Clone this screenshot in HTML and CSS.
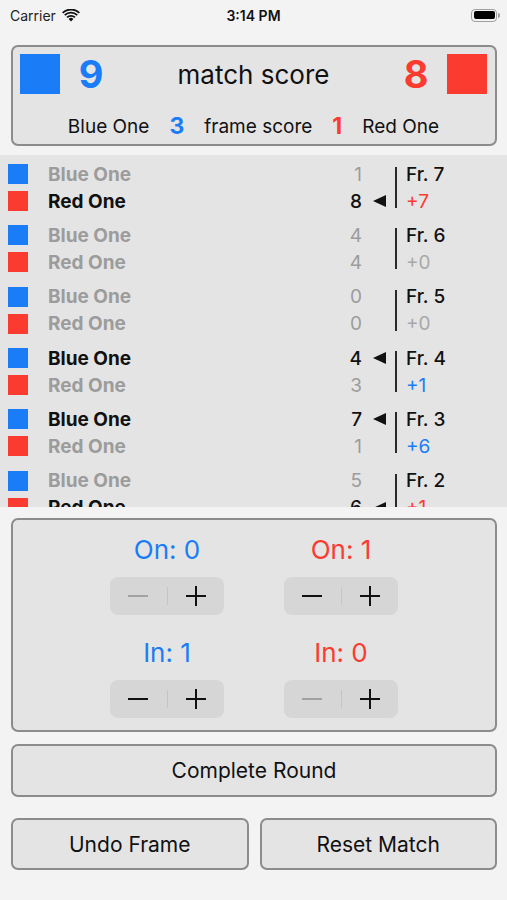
FILE: index.html
```html
<!DOCTYPE html>
<html>
<head>
<meta charset="utf-8">
<link rel="stylesheet" href="styles.css">
</head>
<body>
<div class="status">
  <div class="carrier">Carrier
    <svg class="wifi" width="18" height="13" viewBox="0 0 18 13"><path d="M9 12.5 L6.6 10 A3.4 3.4 0 0 1 11.4 10 Z" fill="#111"/><path d="M4.4 7.8 A6.5 6.5 0 0 1 13.6 7.8 L12.3 9.1 A4.7 4.7 0 0 0 5.7 9.1 Z" fill="#111"/><path d="M2.1 5.5 A9.8 9.8 0 0 1 15.9 5.5 L14.6 6.8 A8 8 0 0 0 3.4 6.8 Z" fill="#111"/><path d="M0 3.3 A12.8 12.8 0 0 1 18 3.3 L16.7 4.6 A11 11 0 0 0 1.3 4.6 Z" fill="#111"/></svg>
  </div>
  <div class="time">3:14 PM</div>
  <div class="battery"><span class="batt-body"><span class="batt-fill"></span></span><span class="batt-nub"></span></div>
</div>

<section class="card score-card">
  <div class="score-top">
    <span class="sq big blue-bg"></span>
    <span class="big-num blue">9</span>
    <span class="match-label">match score</span>
    <span class="big-num red">8</span>
    <span class="sq big red-bg"></span>
  </div>
  <div class="score-bottom">
    <span>Blue One</span>
    <span class="frame-num blue">3</span>
    <span>frame score</span>
    <span class="frame-num red">1</span>
    <span>Red One</span>
  </div>
</section>

<section class="frames">
  <div class="frame">
    <span class="sq blue-bg r1"></span><span class="name dim r1">Blue One</span><span class="pts dim r1">1</span><span class="mark r1"></span>
    <span class="sq red-bg r2"></span><span class="name win r2">Red One</span><span class="pts win r2">8</span><span class="mark r2"><i class="tri"></i></span>
    <span class="vline"></span>
    <span class="fr r1">Fr. 7</span><span class="diff red r2">+7</span>
  </div>
  <div class="frame">
    <span class="sq blue-bg r1"></span><span class="name dim r1">Blue One</span><span class="pts dim r1">4</span><span class="mark r1"></span>
    <span class="sq red-bg r2"></span><span class="name dim r2">Red One</span><span class="pts dim r2">4</span><span class="mark r2"></span>
    <span class="vline"></span>
    <span class="fr r1">Fr. 6</span><span class="diff dim-d r2">+0</span>
  </div>
  <div class="frame">
    <span class="sq blue-bg r1"></span><span class="name dim r1">Blue One</span><span class="pts dim r1">0</span><span class="mark r1"></span>
    <span class="sq red-bg r2"></span><span class="name dim r2">Red One</span><span class="pts dim r2">0</span><span class="mark r2"></span>
    <span class="vline"></span>
    <span class="fr r1">Fr. 5</span><span class="diff dim-d r2">+0</span>
  </div>
  <div class="frame">
    <span class="sq blue-bg r1"></span><span class="name win r1">Blue One</span><span class="pts win r1">4</span><span class="mark r1"><i class="tri"></i></span>
    <span class="sq red-bg r2"></span><span class="name dim r2">Red One</span><span class="pts dim r2">3</span><span class="mark r2"></span>
    <span class="vline"></span>
    <span class="fr r1">Fr. 4</span><span class="diff blue r2">+1</span>
  </div>
  <div class="frame">
    <span class="sq blue-bg r1"></span><span class="name win r1">Blue One</span><span class="pts win r1">7</span><span class="mark r1"><i class="tri"></i></span>
    <span class="sq red-bg r2"></span><span class="name dim r2">Red One</span><span class="pts dim r2">1</span><span class="mark r2"></span>
    <span class="vline"></span>
    <span class="fr r1">Fr. 3</span><span class="diff blue r2">+6</span>
  </div>
  <div class="frame">
    <span class="sq blue-bg r1"></span><span class="name dim r1">Blue One</span><span class="pts dim r1">5</span><span class="mark r1"></span>
    <span class="sq red-bg r2"></span><span class="name win r2">Red One</span><span class="pts win r2">6</span><span class="mark r2"><i class="tri"></i></span>
    <span class="vline"></span>
    <span class="fr r1">Fr. 2</span><span class="diff red r2">+1</span>
  </div>
</section>

<section class="card controls">
  <div class="ctrl-row">
    <div class="ctrl">
      <div class="ctrl-label blue">On: 0</div>
      <div class="stepper"><span class="step-btn"><i class="minus off"></i></span><span class="step-div"></span><span class="step-btn"><i class="plus"></i></span></div>
    </div>
    <div class="ctrl">
      <div class="ctrl-label red">On: 1</div>
      <div class="stepper"><span class="step-btn"><i class="minus"></i></span><span class="step-div"></span><span class="step-btn"><i class="plus"></i></span></div>
    </div>
  </div>
  <div class="ctrl-row second">
    <div class="ctrl">
      <div class="ctrl-label blue">In: 1</div>
      <div class="stepper"><span class="step-btn"><i class="minus"></i></span><span class="step-div"></span><span class="step-btn"><i class="plus"></i></span></div>
    </div>
    <div class="ctrl">
      <div class="ctrl-label red">In: 0</div>
      <div class="stepper"><span class="step-btn"><i class="minus off"></i></span><span class="step-div"></span><span class="step-btn"><i class="plus"></i></span></div>
    </div>
  </div>
</section>

<div class="btn full">Complete Round</div>
<div class="btn-row">
  <div class="btn">Undo Frame</div>
  <div class="btn">Reset Match</div>
</div>
</body>
</html>
```

FILE: styles.css
```css
* { box-sizing: border-box; }
html, body { margin: 0; padding: 0; }
body {
  width: 507px;
  height: 900px;
  background: #f3f3f3;
  font-family: Inter, "Noto Sans", sans-serif;
  color: #111;
  overflow: hidden;
}
.blue { color: #1a7df7; }
.red { color: #fb3b30; }
.blue-bg { background: #1a7df7; }
.red-bg { background: #fb3b30; }

.status {
  height: 30px;
  display: flex;
  align-items: center;
  justify-content: space-between;
  padding: 0 7px 0 10px;
  position: relative;
}
.carrier {
  font-size: 14px;
  display: flex;
  align-items: center;
  gap: 6px;
  color: #222;
}
.time {
  position: absolute;
  left: 0; right: 0;
  text-align: center;
  font-size: 14px;
  font-weight: 600;
  pointer-events: none;
}
.battery { display: flex; align-items: center; }
.batt-body {
  width: 26px; height: 13px;
  border: 1.5px solid #a0a0a0;
  border-radius: 4px;
  padding: 1.5px;
  display: flex;
}
.batt-fill { flex: 1; background: #000; border-radius: 2px; }
.batt-nub { width: 2px; height: 5px; background: #a0a0a0; border-radius: 0 2px 2px 0; margin-left: 1px; }

.card {
  margin: 0 10px 0 11px;
  background: #e4e4e4;
  border: 2px solid #8c8c8c;
  border-radius: 7px;
}
.score-card {
  margin-top: 15px;
  height: 101px;
  padding: 7px 8px 0 7px;
}
.score-top {
  display: flex;
  align-items: center;
  height: 40px;
}
.sq { display: inline-block; width: 20px; height: 20px; }
.sq.big { width: 40px; height: 40px; }
.big-num {
  font-size: 38px;
  font-weight: 700;
  width: 62px;
  text-align: center;
}
.match-label {
  flex: 1;
  text-align: center;
  font-size: 26px;
}
.score-bottom {
  display: flex;
  justify-content: center;
  align-items: center;
  gap: 20px;
  margin-top: 18px;
  font-size: 19px;
}
.frame-num { font-size: 23px; font-weight: 700; }

.frames {
  margin-top: 9px;
  height: 352px;
  background: #e4e4e4;
  overflow: hidden;
  padding-top: 2px;
}
.frame {
  height: 61.3px;
  display: grid;
  grid-template-columns: 8px 20px 20px 1fr auto 33px 2px 9px 101px;
  grid-template-rows: 27px 27px;
  align-content: center;
  align-items: center;
}
.frame .r1 { grid-row: 1; }
.frame .r2 { grid-row: 2; }
.frame .sq { grid-column: 2; }
.name { grid-column: 4; font-size: 19px; font-weight: 700; }
.pts { grid-column: 5; font-size: 19px; text-align: right; font-weight: 500; }
.pts.dim { font-weight: 400; }
.mark { grid-column: 6; display: flex; align-items: center; padding-left: 11px; height: 27px; }
.dim { color: #9c9c9c; }
.win { color: #111; }
.tri {
  display: block;
  width: 0; height: 0;
  border-right: 13px solid #111;
  border-top: 6px solid transparent;
  border-bottom: 6px solid transparent;
}
.vline {
  grid-column: 7;
  grid-row: 1 / 3;
  width: 2px;
  height: 41px;
  background: #2a2a2a;
  align-self: center;
}
.fr { grid-column: 9; font-size: 19px; font-weight: 500; }
.diff { grid-column: 9; font-size: 19px; }
.dim-d { color: #a8a8a8; }

.controls {
  margin-top: 11px;
  height: 214px;
  padding: 15px 0 0;
}
.ctrl-row {
  display: flex;
  justify-content: center;
  gap: 60px;
}
.ctrl-row.second { margin-top: 23px; }
.ctrl { width: 114px; display: flex; flex-direction: column; align-items: center; }
.ctrl-label { font-size: 26px; height: 30px; line-height: 30px; }
.stepper {
  margin-top: 12px;
  width: 114px;
  height: 38px;
  background: #d6d6d6;
  border-radius: 8px;
  display: flex;
  align-items: center;
}
.step-btn { flex: 1; display: flex; align-items: center; justify-content: center; height: 100%; }
.step-div { width: 1px; height: 18px; background: #c5c5c5; }
.minus { display: block; width: 20px; height: 2px; background: #111; }
.minus.off { background: #a2a2a2; }
.plus { display: block; width: 20px; height: 20px; position: relative; }
.plus::before, .plus::after {
  content: "";
  position: absolute;
  background: #111;
}
.plus::before { left: 0; right: 0; top: 9px; height: 2px; }
.plus::after { top: 0; bottom: 0; left: 9px; width: 2px; }

.btn {
  background: #e4e4e4;
  border: 2px solid #8c8c8c;
  border-radius: 7px;
  height: 53px;
  display: flex;
  align-items: center;
  justify-content: center;
  font-size: 21px;
  color: #111;
}
.btn.full { margin: 12px 10px 0 11px; }
.btn-row {
  display: flex;
  gap: 11px;
  margin: 21px 10px 0 11px;
}
.btn-row .btn { flex: 1; height: 52px; }
```
